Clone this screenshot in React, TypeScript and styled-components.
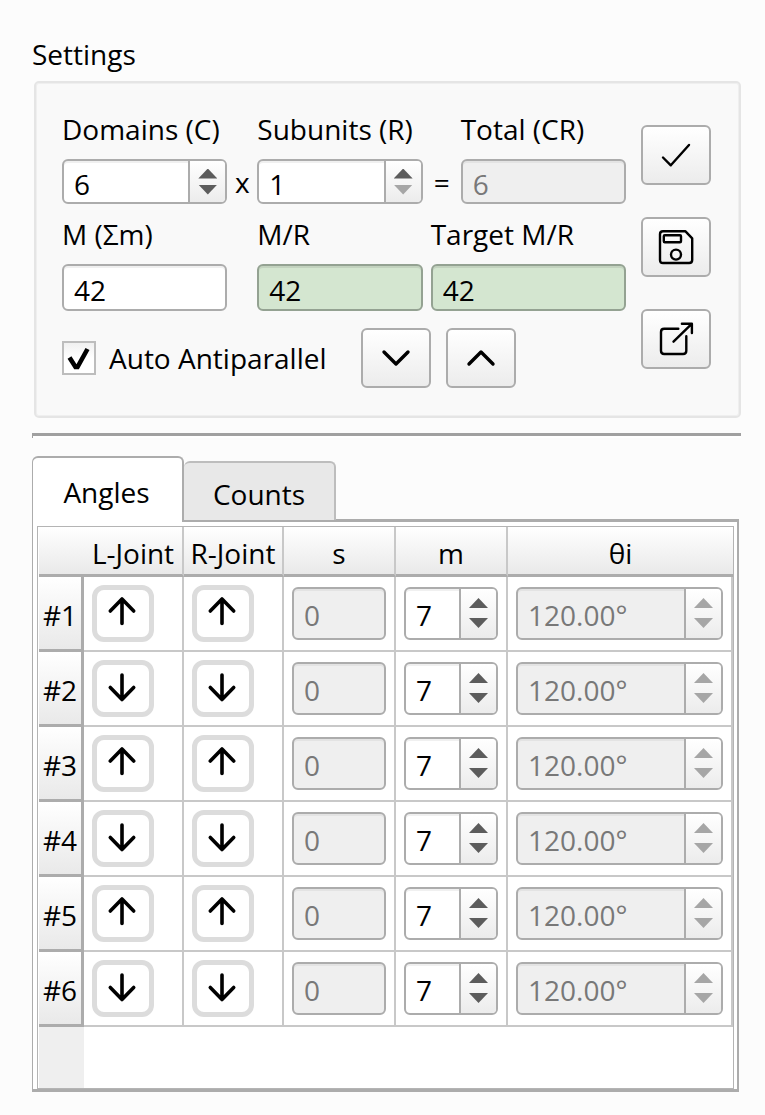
import React, { useState } from "react";
import styled, { createGlobalStyle, css } from "styled-components";

const GlobalStyle = createGlobalStyle`
  *, *::before, *::after { box-sizing: border-box; }
  body {
    margin: 0;
    background: #fcfcfc;
    color: #000;
    font-family: "Open Sans", "Noto Sans", sans-serif;
    font-size: 28px;
    line-height: 36px;
  }
  button, input { font: inherit; color: inherit; }
`;

const Window = styled.main`
  padding: 36px 24px 24px 32px;
`;

const GroupTitle = styled.h1`
  margin: 0 0 9px;
  font-size: 28px;
  font-weight: 400;
  line-height: 36px;
`;

const GroupBox = styled.section`
  display: flex;
  gap: 15px;
  margin-left: 2px;
  padding: 28px 28px 28px 26px;
  background: #f9f9f9;
  border: 2px solid #e5e5e5;
  border-radius: 5px;
  box-shadow: inset 0 0 0 1px #efefef;
`;

const Form = styled.div`
  flex: 1;
  min-width: 0;
`;

const FieldGrid = styled.div`
  display: grid;
  grid-template-columns: minmax(0, 1fr) 30px minmax(0, 1fr) 38px minmax(0, 1fr);
  row-gap: 12px;
  align-items: end;
`;

const Field = styled.div<{ $column: string; $inset?: boolean }>`
  grid-column: ${(p) => p.$column};
  padding-left: ${(p) => (p.$inset ? 8 : 0)}px;
`;

const FieldLabel = styled.label`
  display: block;
  margin-bottom: 12px;
  white-space: nowrap;
`;

const Operator = styled.span`
  height: 46px;
  padding-top: 6px;
  text-align: center;
`;

type Tone = "plain" | "green" | "disabled";

const tones = {
  plain: css`
    color: #000;
    background: #fff;
    border-color: #acacac;
    box-shadow: inset 0 2px 0 #f0f0f0;
  `,
  green: css`
    color: #000;
    background: #d4e6d0;
    border-color: #94a292;
    box-shadow: inset 0 2px 0 #c3d3bf;
  `,
  disabled: css`
    color: #787878;
    background: #efefef;
    border-color: #acacac;
    box-shadow: inset 0 2px 0 #e3e3e3;
  `,
};

const TextInput = styled.input<{ $tone: Tone; $height: number }>`
  display: block;
  width: 100%;
  height: ${(p) => p.$height}px;
  padding: 4px 10px 0;
  border: 2px solid;
  border-radius: 6px;
  outline: none;
  ${(p) => tones[p.$tone]}
`;

const SpinFrame = styled.div<{ $tone: Tone; $height: number }>`
  display: flex;
  height: ${(p) => p.$height}px;
  border: 2px solid;
  border-radius: 6px;
  overflow: hidden;
  ${(p) => tones[p.$tone]}
`;

const SpinInput = styled.input`
  flex: 1;
  min-width: 0;
  padding: 4px 0 0 10px;
  background: transparent;
  border: 0;
  outline: none;
`;

const SpinButtons = styled.div<{ $gap: number }>`
  display: flex;
  flex-direction: column;
  align-items: center;
  justify-content: center;
  gap: ${(p) => p.$gap}px;
  width: 37px;
  background: linear-gradient(#fff, #ececec);
  border-left: 2px solid #acacac;
`;

const StepButton = styled.button<{ $up?: boolean }>`
  width: 19px;
  height: 10px;
  padding: 0;
  border: 0;
  background: #5c5c5c;
  clip-path: ${(p) => (p.$up ? "polygon(50% 0, 100% 100%, 0 100%)" : "polygon(0 0, 100% 0, 50% 100%)")};
  &:disabled { background: #a6a6a6; }
`;

const OptionsRow = styled.div`
  display: flex;
  align-items: center;
  gap: 15px;
  margin-top: 17px;
`;

const CheckLabel = styled.label`
  display: flex;
  align-items: center;
  gap: 13px;
  margin-right: 19px;
  white-space: nowrap;
`;

const CheckBoxWrap = styled.span`
  display: grid;
  width: 34px;
  height: 34px;
  > * { grid-area: 1 / 1; }
`;

const CheckBox = styled.input`
  appearance: none;
  width: 34px;
  height: 34px;
  margin: 0;
  background: linear-gradient(#f0f0f0, #fff 50%);
  border: 2px solid #bdbdbd;
  &:not(:checked) + svg { visibility: hidden; }
`;

const CheckMark = styled.svg`
  pointer-events: none;
`;

const ToolButton = styled.button`
  display: flex;
  flex: none;
  align-items: center;
  justify-content: center;
  width: 70px;
  height: 60px;
  padding: 0;
  background: linear-gradient(#fff, #ececec);
  border: 2px solid #acacac;
  border-radius: 6px;
`;

const ToolColumn = styled.div`
  display: flex;
  flex-direction: column;
  gap: 32px;
  padding-top: 14px;
`;

const Icon = styled.svg.attrs({ viewBox: "0 0 36 36", "aria-hidden": true })<{ $stroke: number }>`
  width: 36px;
  height: 36px;
  fill: none;
  stroke: #000;
  stroke-width: ${(p) => p.$stroke}px;
  stroke-linecap: round;
  stroke-linejoin: round;
`;

const Divider = styled.hr`
  height: 5px;
  margin: 15px 0 18px;
  border: solid #a0a0a0;
  border-width: 3px 0 0 1px;
  background: #fff;
`;

const TabBar = styled.div`
  display: flex;
  align-items: flex-end;
  height: 63px;
`;

const Tab = styled.button<{ $active: boolean }>`
  width: 152px;
  padding: 0;
  border-radius: 6px 6px 0 0;
  ${(p) =>
    p.$active
      ? css`
          height: 66px;
          margin-bottom: -3px;
          padding-top: 4px;
          padding-right: 2px;
          background: #fff;
          border: 2px solid #acacac;
          border-left-width: 1px;
          border-bottom: 0;
          z-index: 1;
        `
      : css`
          height: 59px;
          margin-bottom: -1px;
          padding-top: 4px;
          background: #e8e8e8;
          border: 2px solid #bdbdbd;
          border-left: 0;
          border-bottom: 0;
        `}
`;

const TabPane = styled.section`
  margin-right: 2px;
  padding: 4px 3px 0 4px;
  background: #fff;
  border: solid #acacac;
  border-width: 3px 2px 3px 1px;
`;

const TableFrame = styled.div`
  padding-left: 1px;
  border: 1px solid #b4b4b4;
`;

const JointTable = styled.table`
  width: 100%;
  table-layout: fixed;
  border-collapse: separate;
  border-spacing: 0;
`;

const Col = styled.col<{ $width?: number }>`
  width: ${(p) => (p.$width ? `${p.$width}px` : "auto")};
`;

const ColumnHead = styled.th<{ $first?: boolean }>`
  height: 50px;
  padding: 5px 0 0;
  font-weight: 400;
  text-align: center;
  white-space: nowrap;
  background: linear-gradient(#fff, #e9e9e9);
  border-right: ${(p) => (p.$first ? 0 : 2)}px solid #c8c8c8;
  border-bottom: 3px solid #acacac;
  &:last-child { border-right: 0; }
`;

const RowHead = styled.th`
  height: 75px;
  padding: 3px 0 0;
  font-weight: 400;
  text-align: center;
  background: linear-gradient(to bottom, #fff, #e9e9e9);
  border-right: 3px solid #acacac;
  border-bottom: 3px solid #acacac;
`;

const Cell = styled.td<{ $joint?: boolean }>`
  height: 75px;
  padding: ${(p) => (p.$joint ? "0 0 1px 8px" : "0 8px 1px 8px")};
  vertical-align: middle;
  border-right: 2px solid #c8c8c8;
  border-bottom: 2px solid #c8c8c8;
`;

const JointButton = styled.button`
  display: flex;
  align-items: center;
  justify-content: center;
  width: 62px;
  height: 57px;
  padding: 0;
  background: #fff;
  border: 5px solid #dcdcdc;
  border-radius: 12px;
`;

const HeaderFiller = styled.div`
  width: 45px;
  height: 61px;
  background: #efefef;
`;

type SpinProps = {
  id?: string;
  label?: string;
  initial: number;
  min?: number;
  format?: (n: number) => string;
  disabled?: boolean;
  height: number;
  gap: number;
};

function SpinBox({ id, label, initial, min = 0, format = String, disabled, height, gap }: SpinProps) {
  const [value, setValue] = useState(initial);
  return (
    <SpinFrame $tone={disabled ? "disabled" : "plain"} $height={height}>
      <SpinInput
        id={id}
        aria-label={label}
        value={format(value)}
        disabled={disabled}
        onChange={(e) => setValue(Number(e.target.value) || min)}
      />
      <SpinButtons $gap={gap}>
        <StepButton $up type="button" aria-label="Increase" disabled={disabled} onClick={() => setValue(value + 1)} />
        <StepButton type="button" aria-label="Decrease" disabled={disabled || value <= min} onClick={() => setValue(value - 1)} />
      </SpinButtons>
    </SpinFrame>
  );
}

function JointToggle({ label, initialUp }: { label: string; initialUp: boolean }) {
  const [up, setUp] = useState(initialUp);
  return (
    <JointButton type="button" aria-label={label} onClick={() => setUp(!up)}>
      <Icon $stroke={3.6}>
        <path d={up ? "M17 28.5V4M5.3 16L17 4L28.7 16" : "M17 5V29.5M5.3 17.5L17 29.5L28.7 17.5"} />
      </Icon>
    </JointButton>
  );
}

const degrees = (n: number) => `${n.toFixed(2)}°`;
const rows = [1, 2, 3, 4, 5, 6];

export default function App() {
  const [tab, setTab] = useState("Angles");
  return (
    <>
      <GlobalStyle />
      <Window>
        <GroupTitle>Settings</GroupTitle>
        <GroupBox>
          <Form>
            <FieldGrid>
              <Field $column="1">
                <FieldLabel htmlFor="domains">Domains (C)</FieldLabel>
                <SpinBox id="domains" initial={6} min={1} height={45} gap={6} />
              </Field>
              <Operator>x</Operator>
              <Field $column="3">
                <FieldLabel htmlFor="subunits">Subunits (R)</FieldLabel>
                <SpinBox id="subunits" initial={1} min={1} height={45} gap={6} />
              </Field>
              <Operator>=</Operator>
              <Field $column="5">
                <FieldLabel htmlFor="total">Total (CR)</FieldLabel>
                <TextInput id="total" $tone="disabled" $height={45} defaultValue="6" disabled />
              </Field>
              <Field $column="1">
                <FieldLabel htmlFor="m-sum">M (Σm)</FieldLabel>
                <TextInput id="m-sum" $tone="plain" $height={47} defaultValue="42" />
              </Field>
              <Field $column="3">
                <FieldLabel htmlFor="m-over-r">M/R</FieldLabel>
                <TextInput id="m-over-r" $tone="green" $height={47} defaultValue="42" />
              </Field>
              <Field $column="4 / 6" $inset>
                <FieldLabel htmlFor="target">Target M/R</FieldLabel>
                <TextInput id="target" $tone="green" $height={47} defaultValue="42" />
              </Field>
            </FieldGrid>
            <OptionsRow>
              <CheckLabel>
                <CheckBoxWrap>
                  <CheckBox type="checkbox" defaultChecked />
                  <CheckMark width="34" height="34" viewBox="0 0 34 34" fill="none" stroke="#000" strokeWidth="4.6">
                    <path d="M7.5 16.5L13.5 26H15.5L25.5 8" />
                  </CheckMark>
                </CheckBoxWrap>
                Auto Antiparallel
              </CheckLabel>
              <ToolButton type="button" aria-label="Move down">
                <Icon $stroke={3.4}><path d="M6 12L18 24L30 12" /></Icon>
              </ToolButton>
              <ToolButton type="button" aria-label="Move up">
                <Icon $stroke={3.4}><path d="M6 24L18 12L30 24" /></Icon>
              </ToolButton>
            </OptionsRow>
          </Form>
          <ToolColumn>
            <ToolButton type="button" aria-label="Apply">
              <Icon $stroke={2.4}><path d="M5 20.5L12.8 28.3L31 8" /></Icon>
            </ToolButton>
            <ToolButton type="button" aria-label="Save">
              <Icon $stroke={2.4}>
                <path d="M5 2.3H27.5L34.2 9.3V31Q34.2 34 31.2 34H5Q2 34 2 31V5.3Q2 2.3 5 2.3Z" />
                <rect x="5.8" y="6.2" width="17.2" height="7" rx="1" />
                <circle cx="18" cy="25.6" r="5" />
              </Icon>
            </ToolButton>
            <ToolButton type="button" aria-label="Export">
              <Icon $stroke={2.4}>
                <path d="M20.3 7.8H6.2Q3 7.8 3 11V29.8Q3 33 6.2 33H25.1Q28.3 33 28.3 29.8V15.3" />
                <path d="M15.5 20.7L33.7 2.9M23.9 2.7H33.9V12" />
              </Icon>
            </ToolButton>
          </ToolColumn>
        </GroupBox>
        <Divider />
        <TabBar role="tablist">
          {["Angles", "Counts"].map((name) => (
            <Tab key={name} type="button" role="tab" aria-selected={tab === name} $active={tab === name} onClick={() => setTab(name)}>
              {name}
            </Tab>
          ))}
        </TabBar>
        <TabPane>
          <TableFrame>
            <JointTable>
              <colgroup>
                <Col $width={45} />
                <Col $width={100} />
                <Col $width={100} />
                <Col $width={112} />
                <Col $width={112} />
                <Col />
              </colgroup>
              <thead>
                <tr>
                  <ColumnHead $first />
                  {["L-Joint", "R-Joint", "s", "m", "θi"].map((name) => (
                    <ColumnHead key={name} scope="col">{name}</ColumnHead>
                  ))}
                </tr>
              </thead>
              <tbody>
                {rows.map((n) => (
                  <tr key={n}>
                    <RowHead scope="row">#{n}</RowHead>
                    <Cell $joint><JointToggle label={`Left joint ${n}`} initialUp={n % 2 === 1} /></Cell>
                    <Cell $joint><JointToggle label={`Right joint ${n}`} initialUp={n % 2 === 1} /></Cell>
                    <Cell><TextInput aria-label={`s ${n}`} $tone="disabled" $height={53} defaultValue="0" disabled /></Cell>
                    <Cell><SpinBox label={`m ${n}`} initial={7} height={53} gap={10} /></Cell>
                    <Cell><SpinBox label={`Theta ${n}`} initial={120} format={degrees} disabled height={53} gap={10} /></Cell>
                  </tr>
                ))}
              </tbody>
            </JointTable>
            <HeaderFiller />
          </TableFrame>
        </TabPane>
      </Window>
    </>
  );
}
